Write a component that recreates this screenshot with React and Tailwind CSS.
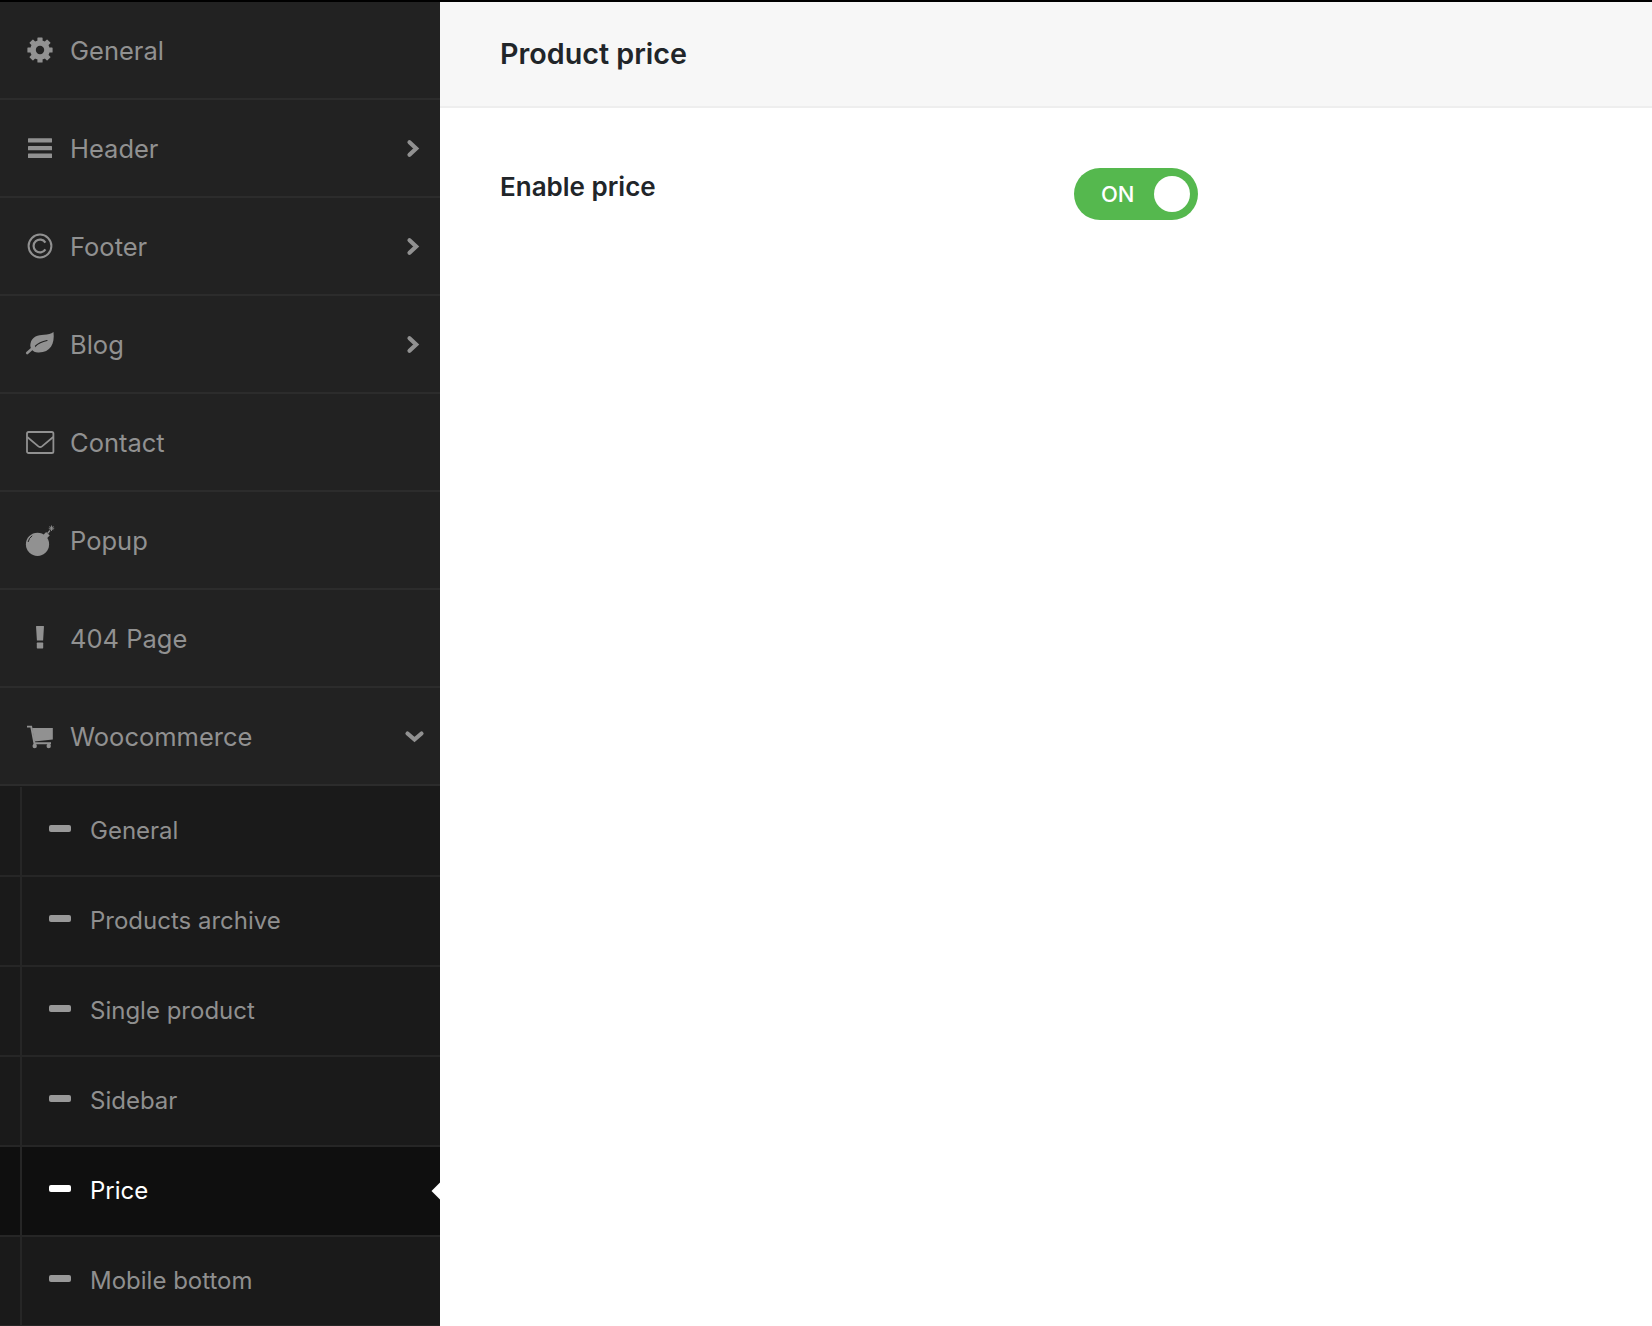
// icons drawn on a 40x40 box so they line up with the row centre
const GearIcon = () => (
    <svg width="40" height="40" viewBox="0 0 40 40" fill="currentColor">
        {[0, 45, 90, 135, 180, 225, 270, 315].map((deg) => (
            <rect key={deg} x="17.4" y="7.4" width="5.2" height="6" rx="0.6" transform={`rotate(${deg} 20 20)`} />
        ))}
        <circle cx="20" cy="20" r="9.8" />
        <circle cx="20" cy="20" r="4.2" fill="#222222" />
    </svg>
)

const BarsIcon = () => (
    <svg width="40" height="40" viewBox="0 0 40 40" fill="currentColor">
        <rect x="8" y="10.2" width="24" height="4.3" rx="0.5" />
        <rect x="8" y="17.9" width="24" height="4.3" rx="0.5" />
        <rect x="8" y="25.6" width="24" height="4.3" rx="0.5" />
    </svg>
)

const CopyrightIcon = () => (
    <svg width="40" height="40" viewBox="0 0 40 40" fill="none" stroke="currentColor">
        <circle cx="20" cy="20" r="11.4" strokeWidth="2" />
        <path d="M25.4 16.6 A6.4 6.4 0 1 0 25.4 23.4" strokeWidth="2.2" />
    </svg>
)

const LeafIcon = () => (
    <svg width="40" height="40" viewBox="0 0 40 40" fill="currentColor">
        <path d="M33.5 8 C35 20 30 29 18 28.5 C12.5 28.3 9.5 24 10.5 19.5 C12 12.5 18 11 24 10.8 C28 10.6 31 10 33.5 8 Z" />
        <path d="M15 22.5 C18 19.5 22 17.5 27 16.5" fill="none" stroke="#222222" strokeWidth="1.2" strokeLinecap="round" />
        <path d="M7.2 29 L14 23" fill="none" stroke="currentColor" strokeWidth="2.6" strokeLinecap="round" />
    </svg>
)

const EnvelopeIcon = () => (
    <svg width="40" height="40" viewBox="0 0 40 40" fill="none" stroke="currentColor" strokeWidth="1.8">
        <rect x="7" y="10" width="26.4" height="21" rx="1.6" />
        <path d="M7.2 15 L18.4 24.4 Q20.2 25.8 22 24.4 L33.2 15" />
    </svg>
)

const BombIcon = () => (
    <svg width="40" height="40" viewBox="0 0 40 40" fill="currentColor">
        <circle cx="17.5" cy="24.3" r="11.6" />
        <rect x="23.5" y="13" width="5" height="5.5" transform="rotate(45 26 15.7)" />
        <path d="M8.2 21.6 Q9 18 11.8 16" fill="none" stroke="#222222" strokeWidth="1" strokeLinecap="round" />
        <path d="M27.5 13.5 L30 10.5" fill="none" stroke="currentColor" strokeWidth="1.2" />
        <path d="M31.5 5.5 V11 M28.8 8.2 H34.2 M29.6 6.3 L33.4 10.1 M33.4 6.3 L29.6 10.1" fill="none" stroke="currentColor" strokeWidth="0.9" />
    </svg>
)

const ExclamationIcon = () => (
    <svg width="40" height="40" viewBox="0 0 40 40" fill="currentColor">
        <path d="M16 8.5 Q16 8 16.5 8 H23.5 Q24 8 24 8.5 L23.1 22.5 H16.9 Z" />
        <rect x="16.8" y="24.6" width="6.4" height="5.8" rx="0.6" />
    </svg>
)

const CartIcon = () => (
    <svg width="40" height="40" viewBox="0 0 40 40" fill="currentColor">
        <path d="M12.2 12 H32.8 V23.4 L14.4 25.4 Z" />
        <path d="M7 10.6 H11.2 L14.4 27.2 H31" fill="none" stroke="currentColor" strokeWidth="1.9" />
        <circle cx="14.7" cy="30" r="2.2" />
        <circle cx="28.7" cy="30" r="2.2" />
    </svg>
)

const ArrowRight = () => (
    <svg width="40" height="40" viewBox="0 0 40 40" fill="none" stroke="currentColor" strokeWidth="4.2" strokeLinecap="round" strokeLinejoin="miter">
        <path d="M14.5 14.2 L21.2 20.5 L14.5 26.8" />
    </svg>
)

const ArrowDown = () => (
    <svg width="40" height="40" viewBox="0 0 40 40" fill="none" stroke="currentColor" strokeWidth="4.2" strokeLinecap="round" strokeLinejoin="miter">
        <path d="M12.5 17.5 L19.5 23.5 L26.5 17.5" />
    </svg>
)

const menu = [
    { label: 'General', icon: GearIcon },
    { label: 'Header', icon: BarsIcon, arrow: 'right' },
    { label: 'Footer', icon: CopyrightIcon, arrow: 'right' },
    { label: 'Blog', icon: LeafIcon, arrow: 'right' },
    { label: 'Contact', icon: EnvelopeIcon },
    { label: 'Popup', icon: BombIcon },
    { label: '404 Page', icon: ExclamationIcon },
    { label: 'Woocommerce', icon: CartIcon, arrow: 'down' },
]

const subMenu = ['General', 'Products archive', 'Single product', 'Sidebar', 'Price', 'Mobile bottom']

function MenuRow({ item }) {
    const Icon = item.icon
    return (
        <div className="flex h-[98px] items-center border-b-2 border-[#2c2c2c] bg-[#222222] pl-[20px] text-[#919191]">
            <Icon />
            <span className="ml-[10px] mt-[3px] text-[25.5px]">{item.label}</span>
            {item.arrow && (
                <div className="ml-auto mr-[5px]">
                    {item.arrow === 'right' ? <ArrowRight /> : <ArrowDown />}
                </div>
            )}
        </div>
    )
}

function SubRow({ label }) {
    const active = label === 'Price'
    return (
        <div className={`relative flex h-[90px] border-b-2 border-[#262626] ${active ? 'bg-[#0f0f0f] text-white' : 'bg-[#1a1a1a] text-[#8f8f8f]'}`}>
            <div className="w-[22px] shrink-0 border-r-2 border-[#262626]" />
            <div className="flex flex-1 items-center pl-[27px]">
                <div className={`mb-[6px] h-[7px] w-[22px] rounded-[2px] ${active ? 'bg-white' : 'bg-[#999999]'}`} />
                <span className="ml-[19px] text-[24px] leading-none">{label}</span>
            </div>
            {active && <div className="absolute right-[-6px] top-[38px] h-[12px] w-[12px] rotate-45 bg-white" />}
        </div>
    )
}

export default function App() {
    return (
        <div className="flex h-[1326px] overflow-hidden border-t-2 border-black bg-white font-['Inter',sans-serif]">
            <div className="relative w-[440px] shrink-0 overflow-hidden">
                {menu.map((item) => (
                    <MenuRow key={item.label} item={item} />
                ))}
                <div className="bg-[#1a1a1a] pt-[1px]">
                    {subMenu.map((label) => (
                        <SubRow key={label} label={label} />
                    ))}
                </div>
            </div>
            <div className="flex-1">
                <div className="flex h-[106px] items-center border-b-2 border-[#eeeeee] bg-[#f7f7f7] pl-[60px]">
                    <h1 className="text-[28.7px] font-semibold text-[#212529]">Product price</h1>
                </div>
                <div className="flex pl-[60px] pt-[60px]">
                    <div className="w-[574px] pt-[3px] text-[26px] font-semibold leading-[32px] text-[#212529]">Enable price</div>
                    <div className="flex h-[52px] w-[124px] items-center justify-between rounded-full bg-[#55b84e] pl-[27px] pr-[8px]">
                        <span className="text-[22px] font-medium text-white">ON</span>
                        <div className="h-[36px] w-[36px] rounded-full bg-white" />
                    </div>
                </div>
            </div>
        </div>
    )
}
